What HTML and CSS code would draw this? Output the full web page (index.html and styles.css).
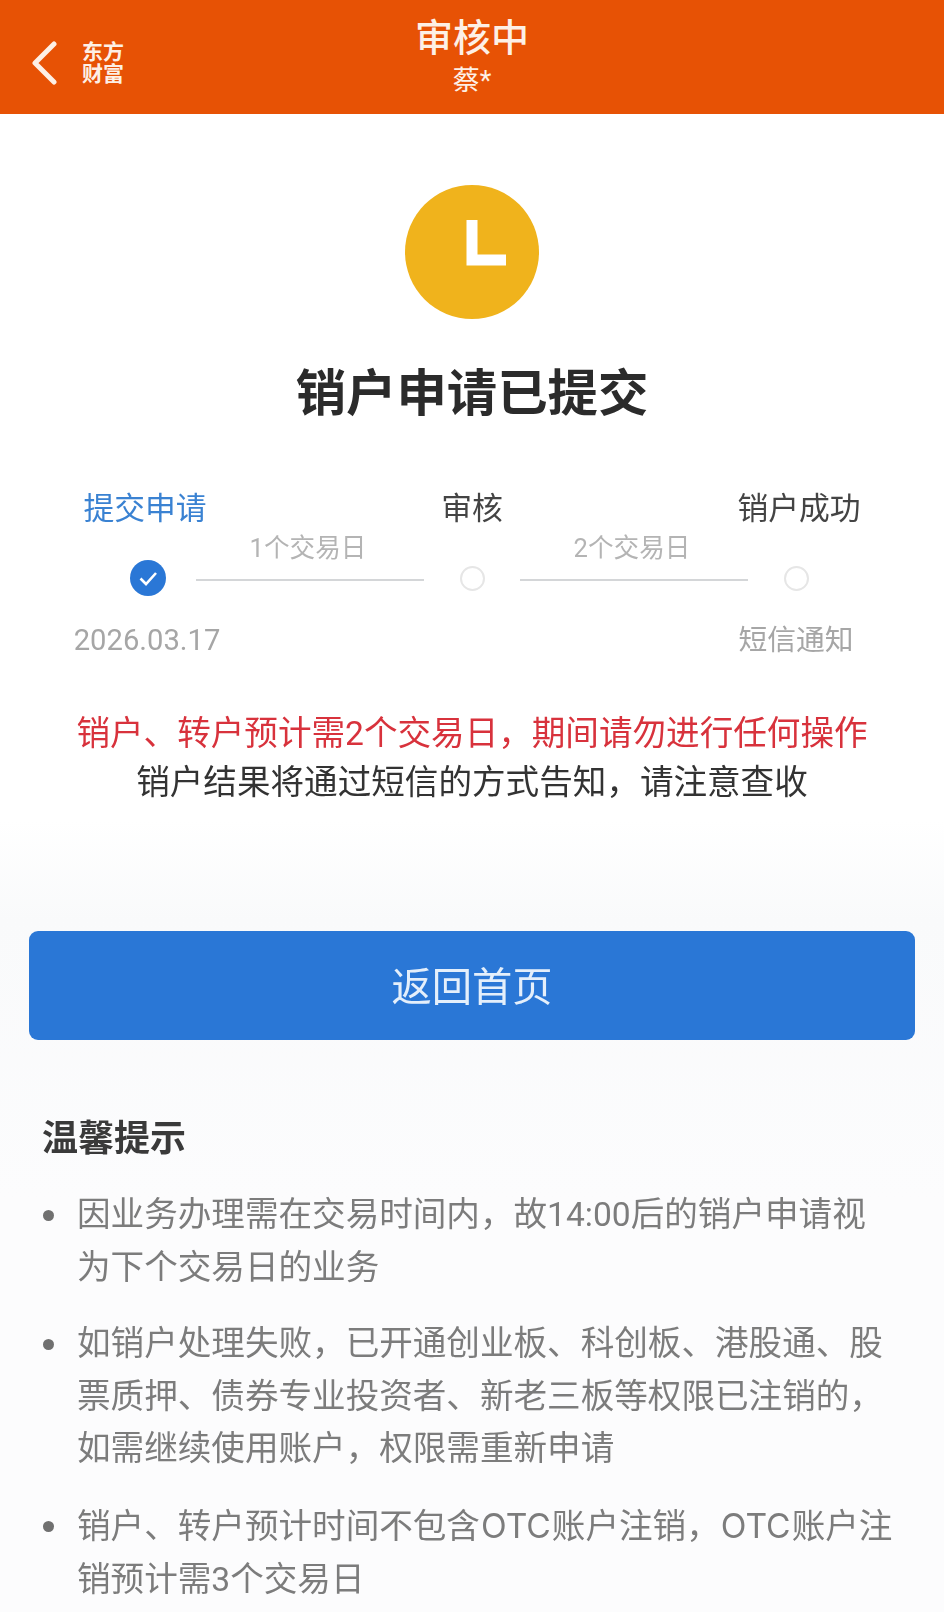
FILE: index.html
```html
<!DOCTYPE html>
<html lang="zh-CN">
  <head>
    <meta charset="UTF-8" />
    <meta name="viewport" content="width=device-width, initial-scale=1.0" />
    <title>审核中</title>
    <link rel="stylesheet" href="styles.css">
  </head>
  <body>
    <!-- Header -->
    <div class="header">
      <div class="header-left">
        <svg class="back-icon" width="26" height="44" viewBox="0 0 26 44">
          <polyline points="23,3 4,22 23,41" fill="none" stroke="#fdf0e6" stroke-width="5" stroke-linecap="round" stroke-linejoin="round" />
        </svg>
        <div class="logo">东方<br />财富</div>
      </div>
      <div class="header-title">审核中</div>
      <div class="header-sub">蔡*</div>
    </div>

    <!-- Status -->
    <div class="status">
      <div class="status-icon">
        <svg width="134" height="134" viewBox="0 0 134 134">
          <circle cx="67" cy="67" r="67" fill="#f0b31c" />
          <polyline points="67,35 67,75 101,75" fill="none" stroke="#fff" stroke-width="11" />
        </svg>
      </div>
      <h1>销户申请已提交</h1>
    </div>

    <!-- Steps -->
    <div class="steps">
      <div class="step-label active">提交申请</div>
      <div class="step-label col-3">审核</div>
      <div class="step-label col-5 last">销户成功</div>

      <div class="step-dot">
        <svg width="36" height="36" viewBox="0 0 36 36">
          <circle cx="18" cy="18" r="18" fill="#2a77d6" />
          <polyline points="10.5,18.5 16,24 26,13" fill="none" stroke="#fff" stroke-width="2.6" />
        </svg>
      </div>
      <div class="connector">
        <span>1个交易日</span>
        <div class="connector-line"></div>
      </div>
      <div class="step-dot"><div class="dot-empty"></div></div>
      <div class="connector">
        <span>2个交易日</span>
        <div class="connector-line"></div>
      </div>
      <div class="step-dot"><div class="dot-empty"></div></div>

      <div class="step-note date">2026.03.17</div>
      <div class="step-note col-5">短信通知</div>
    </div>

    <!-- Notice -->
    <div class="notice">
      <div class="notice-red">销户、转户预计需2个交易日，期间请勿进行任何操作</div>
      <div>销户结果将通过短信的方式告知，请注意查收</div>
    </div>

    <button class="home-btn">返回首页</button>

    <!-- Tips -->
    <div class="tips">
      <h2>温馨提示</h2>
      <ul>
        <li>因业务办理需在交易时间内，故14:00后的销户申请视为下个交易日的业务</li>
        <li>如销户处理失败，已开通创业板、科创板、港股通、股票质押、债券专业投资者、新老三板等权限已注销的，如需继续使用账户，权限需重新申请</li>
        <li>销户、转户预计时间不包含<span class="latin">OTC</span>账户注销，<span class="latin">OTC</span>账户注<br />销预计需3个交易日</li>
      </ul>
    </div>
  </body>
</html>
```

FILE: styles.css
```css
body {
  margin: 0;
  height: 1612px;
  overflow: hidden;
  font-family: Roboto, "Noto Sans CJK SC", sans-serif;
  background: linear-gradient(#fff 0, #fff 820px, #f9fafb 920px, #fcfcfd 1200px);
  color: #333;
  filter: blur(0.5px);
}

/* Header */
.header {
  position: relative;
  height: 114px;
  background: #e75205;
  color: #fdf0e6;
  text-align: center;
}

.header-left {
  position: absolute;
  left: 31px;
  top: 41px;
  display: flex;
  align-items: center;
  gap: 25px;
}

.back-icon {
  display: block;
}

.logo {
  font-size: 21px;
  line-height: 22px;
  font-weight: 700;
}

.header-title {
  padding-top: 14px;
  font-size: 38px;
  line-height: 48px;
  font-weight: 500;
}

.header-sub {
  margin-top: 3px;
  font-size: 27px;
  line-height: 32px;
}

/* Status */
.status {
  padding-top: 71px;
  text-align: center;
}

.status-icon svg {
  display: block;
  margin: 0 auto;
}

.status h1 {
  margin: 40px 0 0;
  font-size: 50.4px;
  line-height: 70px;
  font-weight: 700;
  color: #2b2b2b;
}

/* Steps */
.steps {
  display: grid;
  grid-template-columns: 96px 228px 96px 228px 96px;
  justify-content: center;
  margin-top: 60px;
}

.step-label {
  justify-self: center;
  white-space: nowrap;
  font-size: 30.8px;
  line-height: 40px;
  color: #444;
}

.step-label.active {
  margin-right: 6px;
  color: #3a82d2;
}

.step-label.last {
  margin-left: 6px;
}

.col-3 {
  grid-column: 3;
}

.col-5 {
  grid-column: 5;
}

.step-dot {
  justify-self: center;
  align-self: end;
  height: 36px;
  display: flex;
  align-items: center;
}

.step-dot svg {
  display: block;
}

.dot-empty {
  width: 21px;
  height: 21px;
  border: 2px solid #e6e6e6;
  border-radius: 50%;
}

.connector {
  padding: 1px 0 15px;
  text-align: center;
  font-size: 25.6px;
  line-height: 36px;
  color: #b4b4b4;
}

.connector span {
  margin-right: 4px;
}

.connector-line {
  height: 2px;
  margin-top: 13px;
  background: #d4d6d8;
}

.step-note {
  grid-row: 3;
  justify-self: center;
  white-space: nowrap;
  margin-top: 24px;
  font-size: 28.8px;
  line-height: 40px;
  color: #a6a6a6;
}

.step-note.date {
  margin-right: 2px;
  font-size: 29.2px;
}

/* Notice */
.notice {
  margin-top: 49px;
  text-align: center;
  font-size: 33.6px;
  line-height: 49px;
  color: #333;
}

.notice-red {
  color: #d8323c;
}

.home-btn {
  display: block;
  width: 886px;
  height: 109px;
  margin: 124px 0 0 29px;
  padding: 0 0 5px;
  background: #2a77d6;
  color: #e4effb;
  border: none;
  border-radius: 9px;
  font-family: inherit;
  font-size: 40.3px;
}

/* Tips */
.tips {
  padding: 0 48px 0 42px;
}

.tips h2 {
  margin: 74px 0 0;
  font-size: 36px;
  line-height: 50px;
  font-weight: 700;
  color: #3a3a3a;
}

.tips ul {
  margin: 25px 0 0;
  padding: 0 0 0 35px;
  list-style: none;
}

.tips li {
  position: relative;
  margin-bottom: 24px;
  font-size: 33.6px;
  line-height: 52.6px;
  color: #7c7c7c;
}

.tips li::before {
  content: "";
  position: absolute;
  left: -34px;
  top: 21px;
  width: 11px;
  height: 11px;
  border-radius: 50%;
  background: #707070;
}

.latin {
  margin: 0 1px;
  font-family: Inter, sans-serif;
}
```
